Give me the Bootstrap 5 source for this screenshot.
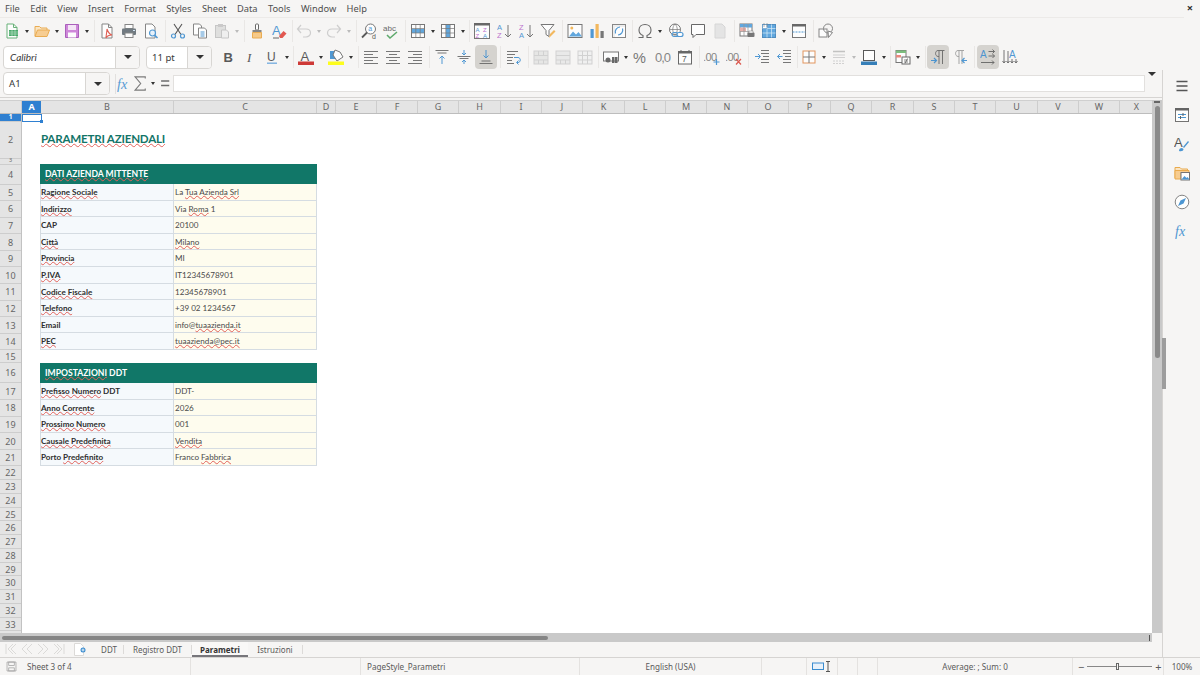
<!DOCTYPE html>
<html lang="it">
<head>
<meta charset="utf-8">
<title>Parametri - Calc</title>
<link href="https://cdn.jsdelivr.net/npm/bootstrap@5.3.0/dist/css/bootstrap.min.css" rel="stylesheet">
<style>
html, body { height: 100%; margin: 0; overflow: hidden; }
body { background: #f6f5f4; font-family: "Noto Sans", sans-serif; font-size: 9.5px; color: #3d3d3d; }
.app { width: 1200px; height: 675px; }

/* menu + toolbars */
.menu-bar { height: 17px; padding-left: 5px; gap: 10.4px; align-items: center; position: relative; }
.menu-bar a { color: #4f4f4f; text-decoration: none; font-size: 9.3px; line-height: 16px; }
.close-x { position: absolute; right: 7px; top: 1px; font-size: 11px; line-height: 14px; color: #333; font-weight: 700; }
.tool-row { align-items: center; padding-left: 1px; }
.tool-row1 { height: 27px; margin-right: 16px; border-top: 1px solid #eceae8; }
.tool-row2 { height: 26px; padding-left: 3px; }
button.tool { width: 22px; height: 24px; padding: 0; border: 0; border-radius: 4px; display: flex; align-items: center; justify-content: center; flex: none; }
button.tool.on { background: #d5d3cf; }
.tool svg { width: 16px; height: 16px; display: block; opacity: .88; }
.fx-tools svg { width: 17px; height: 17px; display: block; opacity: .85; }
.dd { width: 8px; flex: none; display: flex; justify-content: center; }
.dd::before { content: ""; border: 2.5px solid transparent; border-top: 3px solid #333; border-bottom: 0; }
.dd.off::before { border-top-color: #bbb; }
.sp { flex: none; align-self: center; height: 22px; position: relative; }
.sp::before { content: ""; position: absolute; left: 50%; top: 0; bottom: 0; border-left: 1px solid #e9e7e5; }
.s3 { width: 3px; } .s4 { width: 4px; } .s5 { width: 5px; } .s6 { width: 6px; } .s1 { width: 1px; }
.s1::before { display: none; }

.combo { height: 23px; flex: none; border: 1px solid #d8d6d3; border-radius: 4px; background: #fff; display: flex; overflow: hidden; }
.combo .txt { flex: 1; padding-left: 6px; line-height: 21px; font-size: 9.6px; color: #3a3a3a; }
.combo .arr { width: 24px; background: #f6f5f4; border-left: 1px solid #d8d6d3; display: flex; align-items: center; justify-content: center; }
.arr::before { content: ""; border: 4px solid transparent; border-top: 4px solid #333; border-bottom: 0; }
.font-box { width: 137px; margin-right: 6px; font-style: italic; }
.font-box .txt { font-family: Lato, sans-serif; font-size: 10px; }
.size-box { width: 66px; margin-right: 5px; }
.size-box .txt { padding-left: 5px; }

/* formula */
.fx-bar { height: 28px; padding-left: 3px; border-bottom: 1px solid #d6d4d2; margin-bottom: 2px; }
.name-box { width: 107px; margin-right: 5px; }
.name-box .txt { padding-left: 5px; }
.fx-tools { width: 58px; flex: none; border-left: 1px solid #e2e0de; height: 20px; }
.fx-input { width: 972px; height: 17px; background: #fff; border: 1px solid #e2e0de; flex: none; }
.fx-end { width: 14px; display: flex; justify-content: center; }

/* sheet */
.col-heads { height: 14px; background: #e4e4e4; border-top: 1px solid #cfcfcf; border-bottom: 1px solid #bdbdbd; }
.ch { flex: none; text-align: center; line-height: 12px; font-size: 9px; color: #666; border-right: 1px solid #cdcdcd; }
.ch.sel { background: #2f80d1; color: #fff; font-weight: 700; border-right: 0; }
.ch-0 { width: 22px; }
.row-heads { width: 22px; flex: none; background: #e4e4e4; border-right: 1px solid #c2c2c2; }
.rh { text-align: center; color: #666; font-size: 9px; border-bottom: 1px solid #cdcdcd; display: flex; align-items: center; justify-content: center; line-height: 1; }
.rh.sel { background: #2f80d1; color: #fff; font-weight: 700; }
.h1r { height: 7.5px; font-size: 6.5px; } .h2r { height: 37px; } .h3r { height: 6px; font-size: 5.5px; } .h4r { height: 20px; }
.h5r { height: 16.6px; } .h6r { height: 13px; } .h7r { height: 13.75px; }
.canvas { background: #fff; position: relative; overflow: hidden; font-family: Lato, sans-serif; }
.cell-cursor { position: absolute; left: 0; top: 0; width: 19.5px; height: 7.5px; border: 1px solid #2f80d1; }
.cell-cursor::after { content: ""; position: absolute; right: -2px; bottom: -2px; width: 3px; height: 3px; background: #2f80d1; }
.block { margin-left: 18px; width: 277px; }
.gap-a { height: 7.5px; }
.title-row { height: 37px; margin-left: 19px; color: #137568; font-size: 11.6px; font-weight: 700; letter-spacing: -.22px; line-height: 33px; }
.gap-b { height: 5.5px; }
.gap-c { height: 13px; }
.band { height: 20px; background: #117768; color: #fff; font-weight: 700; font-size: 8.6px; line-height: 20px; padding-left: 5px; }
.data-row { height: 16.6px; line-height: 17px; font-size: 8.1px; color: #4a4a4a; }
.lbl { width: 134px; background: #f5f9fc; font-weight: 700; color: #2e2e2e; border-bottom: 1px solid #d5dce2; border-right: 1px solid #d5dce2; border-left: 1px solid #d5dce2; }
.val { width: 143px; padding-left: 1px; background: #fefcee; border-bottom: 1px solid #d5dce2; border-right: 1px solid #d5dce2; }
.sp-err { text-decoration: underline wavy #e2625b; text-decoration-thickness: 1px; text-underline-offset: 0; text-decoration-skip-ink: none; }

.vscroll { width: 10px; flex: none; background: #c9c9c9; position: relative; }
.vscroll-mark { height: 2px; margin: 1px 2px 0; background: #666; }
.vscroll-thumb { width: 5px; height: 252px; margin: 3px 0 0 2.5px; background: #8a8a8a; border-radius: 3px; }
.grip { position: absolute; left: 10px; top: 238px; width: 4px; height: 51px; background: #9d9d9d; z-index: 2; }
.hscroll { height: 9px; margin-right: 10px; background: #c9c9c9; padding: 3px 2px; position: relative; }
.hscroll-thumb { width: 546px; height: 4px; background: #858585; border-radius: 2px; }
.hscroll-end { position: absolute; right: 2px; top: 2px; width: 1px; height: 6px; background: #555; }

.tab-bar { height: 15px; color: #5a5a5a; font-size: 8px; align-items: center; }
.nav-arrows { width: 70px; padding-left: 5px; flex: none; height: 13px; }
.nav-arrows svg { width: 60px; height: 12px; display: block; }
.add-tab { width: 25px; flex: none; display: flex; padding-left: 4px; }
.sheet-tab { text-align: center; height: 15px; line-height: 15px; flex: none; }
.tab-sep { flex: none; width: 1px; height: 9px; background: #dcdad8; }
.sheet-tab.cur { font-weight: 700; color: #333; box-shadow: inset 0 -2px 0 #77767b; background: #f9f8f7; }

.side-col { width: 38px; flex: none; border-left: 1px solid #d6d4d2; }
.side-ic { height: 29px; display: flex; align-items: center; justify-content: center; }
.side-ic svg { width: 16px; height: 16px; display: block; opacity: .9; }
.side-top { margin-top: 1px; }

.status-bar { height: 18px; border-top: 1px solid #d6d4d2; font-size: 8.1px; color: #5a5a5a; line-height: 17px; }
.st-cell { flex: none; height: 17px; border-left: 1px solid #e4e2e0; display: flex; align-items: center; }
.st-first { border-left: 0; }
.st-disk { width: 11px; height: 11px; margin: 0 10px 0 6px; }
.st-page { width: 219px; padding-left: 6px; }
.st-zoom { width: 91px; padding-left: 5px; font-size: 11px; }
.zoom-track { width: 65px; height: 1px; background: #888; position: relative; margin: 0 3px; }
.zoom-thumb { position: absolute; left: 29px; top: -3px; width: 3px; height: 7px; border: 1px solid #666; background: #f6f5f4; }
.st-pct { width: 37px; }
</style>
</head>
<body>
<svg width="0" height="0" class="position-absolute">
  <defs>
    <symbol id="new" viewBox="0 0 16 16"><path d="M3 1h6.500L13 4.500V15H3z" fill="#fff" stroke="#55a868"/><path d="M9.500 1v3.500H13" fill="none" stroke="#55a868"/><rect x="5" y="7" width="9" height="6" fill="#2f9e58"/><path d="M5 9h9M5 11h9M8 7v6M11 7v6" stroke="#bfe5cb" stroke-width=".6"/></symbol>
    <symbol id="open" viewBox="0 0 16 16"><path d="M1 13V3.500h4.500l1.500 1.500h6V7" fill="#fbe3bd" stroke="#e8a23c"/><path d="M3.500 7H15.500L13 13.500H1z" fill="#f8c885" stroke="#e8a23c"/></symbol>
    <symbol id="save" viewBox="0 0 16 16"><path d="M1.500 1.500h13v13h-13z" fill="#c978d6" stroke="#a04bb4"/><rect x="4" y="2" width="8" height="5" fill="#f4e3f7"/><rect x="4" y="9.500" width="8" height="5" fill="#fff"/></symbol>
    <symbol id="pdf" viewBox="0 0 16 16"><path d="M3 1h6.500L13 4.500V15H3z" fill="#fff" stroke="#777"/><path d="M9.500 1v3.500H13" fill="none" stroke="#777"/><path d="M8 6c1 3 2 5 5 6-3 0-5 1-6 3 0-3 1-6 1-9z" fill="none" stroke="#dc4b3e" stroke-width="1.100"/></symbol>
    <symbol id="print" viewBox="0 0 16 16"><rect x="4" y="1.500" width="8" height="4" fill="#fff" stroke="#777"/><rect x="1" y="5.500" width="14" height="6.500" rx="1" fill="#5f6a72"/><rect x="4" y="10" width="8" height="4.500" fill="#fff" stroke="#777"/><rect x="12" y="7" width="2" height="1" fill="#cfe3f5"/></symbol>
    <symbol id="preview" viewBox="0 0 16 16"><path d="M2.500 1h6.500L12 4V15H2.500z" fill="#fff" stroke="#777"/><circle cx="9.500" cy="10" r="3" fill="#e6f1fb" stroke="#3a8ccf" stroke-width="1.200"/><path d="M11.500 12.200l3 2.800" stroke="#3a8ccf" stroke-width="1.600"/></symbol>
    <symbol id="cut" viewBox="0 0 16 16"><path d="M4 1l7 10.500M12 1L5 11.500" stroke="#3f3f3f" stroke-width="1.100" fill="none"/><circle cx="3.500" cy="13" r="2" fill="none" stroke="#3a8ccf" stroke-width="1.200"/><circle cx="12.500" cy="13" r="2" fill="none" stroke="#3a8ccf" stroke-width="1.200"/></symbol>
    <symbol id="copy" viewBox="0 0 16 16"><path d="M1.500 1h6l2 2v9h-8z" fill="#fff" stroke="#777"/><path d="M6.500 5h6l2 2v8h-8z" fill="#fff" stroke="#777"/><path d="M8.500 9h4M8.500 11h4M8.500 13h4" stroke="#3a8ccf"/></symbol>
    <symbol id="paste" viewBox="0 0 16 16"><rect x="1.500" y="2.500" width="10" height="12" fill="#dcdcdc" stroke="#c0c0c0"/><rect x="4" y="1" width="5" height="3" fill="#c4c4c4"/><path d="M7.500 7h5l2 2v6h-7z" fill="#efefef" stroke="#c0c0c0"/></symbol>
    <symbol id="clone" viewBox="0 0 16 16"><rect x="6.500" y="1" width="3" height="6" rx="1" fill="#fff" stroke="#555"/><rect x="3.500" y="7" width="9" height="2.500" fill="#777"/><path d="M3.500 9.500h9V15h-9z" fill="#f6c37a" stroke="#e8a23c"/></symbol>
    <symbol id="clear" viewBox="0 0 16 16"><text x="1" y="12" font-family="Liberation Sans, sans-serif" font-size="13" fill="#3a8ccf">A</text><path d="M8 13l4.500-5 3 2.500-4 4.500H9z" fill="#e0433a"/><path d="M2 15h6" stroke="#555"/></symbol>
    <symbol id="undo" viewBox="0 0 16 16"><path d="M5 2L1.500 6 5 10M1.500 6H10c3 0 4.500 2 4.500 4s-2 4-4.500 4H7" fill="none" stroke="#c9c9c9" stroke-width="1.200"/></symbol>
    <symbol id="redo" viewBox="0 0 16 16"><path d="M11 2l3.500 4L11 10M14.500 6H6C3 6 1.500 8 1.500 10s2 4 4.500 4h3" fill="none" stroke="#c9c9c9" stroke-width="1.200"/></symbol>
    <symbol id="find" viewBox="0 0 16 16"><circle cx="9.500" cy="6" r="5" fill="#fff" stroke="#666"/><path d="M6 9.500L1 14.500" stroke="#444" stroke-width="1.800"/><text x="7.200" y="8.300" font-family="Liberation Sans, sans-serif" font-size="7" fill="#3a8ccf">a</text><text x="11" y="15.500" font-family="Liberation Sans, sans-serif" font-size="7" fill="#444">d</text></symbol>
    <symbol id="spell" viewBox="0 0 16 16"><text x="0" y="8" font-family="Liberation Sans, sans-serif" font-size="8" fill="#555">abc</text><path d="M4 12l3 3 7-6" fill="none" stroke="#4aa05a" stroke-width="1.500"/></symbol>
    <symbol id="rows" viewBox="0 0 16 16"><rect x="1.500" y="1.500" width="13" height="13" fill="#fff" stroke="#666"/><rect x="2" y="6" width="12" height="4" fill="#4d9ddb"/><path d="M1.500 5.500h13M1.500 10h13M5.800 1.500v13M10.200 1.500v13" stroke="#666" stroke-width=".7"/></symbol>
    <symbol id="cols" viewBox="0 0 16 16"><rect x="1.500" y="1.500" width="13" height="13" fill="#fff" stroke="#666"/><rect x="6" y="2" width="4" height="12" fill="#4d9ddb"/><path d="M1.500 5.500h13M1.500 10h13M5.800 1.500v13M10.200 1.500v13" stroke="#666" stroke-width=".7"/></symbol>
    <symbol id="sortaz" viewBox="0 0 16 16"><rect x=".5" y=".5" width="15" height="15" fill="#fff" stroke="#666"/><rect x="0" y="0" width="16" height="2.500" fill="#555"/><text x="1.500" y="8.500" font-family="Liberation Sans, sans-serif" font-size="6" fill="#3a8ccf">A</text><text x="9" y="8.500" font-family="Liberation Sans, sans-serif" font-size="6" fill="#b560c8">Z</text><text x="1.500" y="14.500" font-family="Liberation Sans, sans-serif" font-size="6" fill="#b560c8">Z</text><text x="9" y="14.500" font-family="Liberation Sans, sans-serif" font-size="6" fill="#3a8ccf">A</text></symbol>
    <symbol id="asc" viewBox="0 0 16 16"><text x="1" y="7" font-family="Liberation Sans, sans-serif" font-size="7.500" fill="#3a8ccf">A</text><text x="1" y="15" font-family="Liberation Sans, sans-serif" font-size="7.500" fill="#b560c8">Z</text><path d="M12 2v12M9 11l3 3 3-3" fill="none" stroke="#666"/></symbol>
    <symbol id="desc" viewBox="0 0 16 16"><text x="1" y="7" font-family="Liberation Sans, sans-serif" font-size="7.500" fill="#b560c8">Z</text><text x="1" y="15" font-family="Liberation Sans, sans-serif" font-size="7.500" fill="#3a8ccf">A</text><path d="M12 2v12M9 11l3 3 3-3" fill="none" stroke="#666"/></symbol>
    <symbol id="filter" viewBox="0 0 16 16"><path d="M1 1.500h13l-5 6v6l-3-2v-4z" fill="#fff" stroke="#666"/><path d="M9 15l1-4 4-4 1.500 1.500-4 4z" fill="#f2b04a"/></symbol>
    <symbol id="image" viewBox="0 0 16 16"><rect x="1" y="1.500" width="14" height="13" fill="#fff" stroke="#666"/><circle cx="4.800" cy="5" r="1.500" fill="#f2b04a"/><path d="M2 13.500l4-5 3 3 2.500-2.500 3.500 4.500z" fill="#4d9ddb"/></symbol>
    <symbol id="chart" viewBox="0 0 16 16"><rect x="1.500" y="6" width="3.200" height="9" fill="#3a8ccf"/><rect x="6.500" y="1" width="3.200" height="14" fill="#f2b04a"/><rect x="11.500" y="8" width="3.200" height="7" fill="#666"/></symbol>
    <symbol id="pivot" viewBox="0 0 16 16"><rect x="1.500" y="1.500" width="13" height="13" fill="#eee" stroke="#777"/><rect x="4" y="4" width="10" height="10" fill="#fff"/><path d="M11.500 5.500A5 5 0 0 1 7 12" fill="none" stroke="#3a8ccf" stroke-width="1.200"/><path d="M4.500 10.500A5 5 0 0 1 9 4" fill="none" stroke="#3a8ccf" stroke-width="1.200"/></symbol>
    <symbol id="omega" viewBox="0 0 16 16"><path d="M1.500 14.500h4.500v-2C3.500 11.500 2 9.500 2 7c0-3.500 2.700-5.500 6-5.500S14 3.500 14 7c0 2.500-1.500 4.500-4 5.500v2h4.500" fill="none" stroke="#555" stroke-width="1.100"/></symbol>
    <symbol id="link" viewBox="0 0 16 16"><circle cx="7" cy="6.500" r="5.500" fill="#fff" stroke="#666"/><path d="M1.500 6.500h11M7 1c-3 3-3 8 0 11M7 1c3 3 3 8 0 11" fill="none" stroke="#666" stroke-width=".7"/><rect x="4" y="9.500" width="6" height="4" rx="2" fill="none" stroke="#3a8ccf" stroke-width="1.200"/><rect x="9" y="9.500" width="6" height="4" rx="2" fill="#fff" stroke="#3a8ccf" stroke-width="1.200"/></symbol>
    <symbol id="comment" viewBox="0 0 16 16"><path d="M1.500 1.500h13v10H6l-3 3v-3H1.500z" fill="#fff" stroke="#555"/></symbol>
    <symbol id="header" viewBox="0 0 16 16"><path d="M3 1h7l3 3v11H3z" fill="#e2e2e2" stroke="#d2d2d2"/></symbol>
    <symbol id="hdrgrid" viewBox="0 0 16 16"><rect x="1" y="1" width="12" height="12" fill="#fff" stroke="#666"/><rect x="1" y="1" width="12" height="3.500" fill="#4d9ddb"/><rect x="1" y="4.500" width="6" height="4" fill="#e8a79f"/><path d="M1 8.500h12M5 1v12M9 1v12" stroke="#888" stroke-width=".7"/><rect x="8.500" y="9.500" width="7" height="4.500" rx="1" fill="#666"/><rect x="10" y="8" width="4" height="2" fill="#fff" stroke="#666" stroke-width=".5"/></symbol>
    <symbol id="freeze" viewBox="0 0 16 16"><rect x="1.500" y="1.500" width="13" height="13" fill="#4d9ddb" stroke="#3a7fb8"/><path d="M1.500 5.500h13M1.500 10h13M6 1.500v13M10.500 1.500v13" stroke="#d6ebf9" stroke-width=".7"/><path d="M1.500 1.500h4.500v4H1.500z" fill="#fff" stroke="#3a7fb8" stroke-width=".6"/><path d="M3 .5v3M6 .5v3" stroke="#333" stroke-width=".8" stroke-dasharray="1 1"/></symbol>
    <symbol id="split" viewBox="0 0 16 16"><rect x="1.500" y="1.500" width="13" height="13" fill="#fff" stroke="#666"/><rect x="1" y="1" width="14" height="2.500" fill="#555"/><path d="M1.500 9h13" stroke="#3a8ccf" stroke-dasharray="2 1"/></symbol>
    <symbol id="shapes" viewBox="0 0 16 16"><rect x="1" y="6" width="8" height="8" fill="#fff" stroke="#777"/><circle cx="10" cy="5.500" r="4.500" fill="none" stroke="#777"/><path d="M10 8l4.500 1.500-4 5z" fill="#fff" stroke="#777"/></symbol>

    <symbol id="bold" viewBox="0 0 16 16"><text x="3.500" y="13" font-family="Liberation Sans, sans-serif" font-weight="700" font-size="13" fill="#444">B</text></symbol>
    <symbol id="ital" viewBox="0 0 16 16"><text x="5" y="13" font-family="Liberation Serif, serif" font-style="italic" font-size="13" fill="#444">I</text></symbol>
    <symbol id="under" viewBox="0 0 16 16"><text x="3" y="11.500" font-family="Liberation Sans, sans-serif" font-size="12" fill="#444">U</text><rect x="3" y="13.500" width="10" height="1.400" fill="#6aa7dd"/></symbol>
    <symbol id="fcolor" viewBox="0 0 16 16"><text x="2.500" y="11.500" font-family="Liberation Sans, sans-serif" font-size="13" fill="#444">A</text><rect x="0" y="12.500" width="16" height="3.500" fill="#c9211e"/></symbol>
    <symbol id="bcolor" viewBox="0 0 16 16"><path d="M2 2h6v8H2z" fill="#3a8ccf"/><path d="M7 1l5 2 3 5-6 4-4-6z" fill="#fff" stroke="#666"/><rect x="0" y="12.500" width="16" height="3.500" fill="#ffff00"/></symbol>
    <symbol id="al" viewBox="0 0 16 16"><path d="M1 2.500h14M1 5.500h9M1 8.500h14M1 11.500h9M1 14.500h14" stroke="#666"/></symbol>
    <symbol id="ac" viewBox="0 0 16 16"><path d="M1 2.500h14M4 5.500h8M1 8.500h14M4 11.500h8M1 14.500h14" stroke="#666"/></symbol>
    <symbol id="ar" viewBox="0 0 16 16"><path d="M1 2.500h14M6 5.500h9M1 8.500h14M6 11.500h9M1 14.500h14" stroke="#666"/></symbol>
    <symbol id="vt" viewBox="0 0 16 16"><path d="M1.500 1.500h13M3.500 4h9" stroke="#666"/><path d="M8 15V7M5.500 9.500L8 7l2.500 2.500" fill="none" stroke="#3a8ccf"/></symbol>
    <symbol id="vm" viewBox="0 0 16 16"><path d="M1.500 7.500h13M3.500 9.500h9" stroke="#666"/><path d="M8 1v5M6 4l2 2 2-2M8 15v-4M6 13l2-2 2 2" fill="none" stroke="#3a8ccf"/></symbol>
    <symbol id="vb" viewBox="0 0 16 16"><path d="M3.500 12h9M1.500 14.500h13" stroke="#666"/><path d="M8 1v8M5.500 6.500L8 9l2.500-2.500" fill="none" stroke="#3a8ccf"/></symbol>
    <symbol id="wrap" viewBox="0 0 16 16"><path d="M1 2.500h11M1 5.500h8M1 8.500h6M1 11.500h5M1 14.500h7" stroke="#666"/><path d="M8 8.500h4c3 0 3 5 0 5h-1M12.500 11.500l-2 2 2 2" fill="none" stroke="#3a8ccf"/></symbol>
    <symbol id="merge" viewBox="0 0 16 16"><rect x="1" y="2" width="14" height="13" fill="#e4e4e4" stroke="#cdcdcd"/><path d="M1 6.500h14M1 11h14" stroke="#cdcdcd"/><path d="M5.500 2v4.500M10.500 2v4.500M5.500 11v4M10.500 11v4" stroke="#cdcdcd"/></symbol>
    <symbol id="merge2" viewBox="0 0 16 16"><rect x="1" y="2" width="14" height="13" fill="#e8e8e8" stroke="#cdcdcd"/><path d="M1 6.500h14M1 11h14M5.500 11v4M10.500 11v4" stroke="#cdcdcd"/></symbol>
    <symbol id="merge3" viewBox="0 0 16 16"><rect x="1" y="2" width="14" height="13" fill="#f0f0f0" stroke="#cdcdcd"/><path d="M1 6.500h14M1 11h14M5.500 2v13M10.500 2v13" stroke="#cdcdcd"/></symbol>
    <symbol id="curr" viewBox="0 0 16 16"><rect x=".5" y="3" width="15" height="9" fill="#fff" stroke="#666"/><circle cx="5" cy="11" r="2.500" fill="#555"/><rect x="9" y="8" width="2.500" height="6" fill="#555"/><rect x="12" y="8" width="2.500" height="6" fill="#555"/></symbol>
    <symbol id="pct" viewBox="0 0 16 16"><text x="0" y="13.500" font-family="Liberation Sans, sans-serif" font-size="14.500" fill="#666">%</text></symbol>
    <symbol id="num" viewBox="0 0 16 16"><text x="0" y="13" font-family="Liberation Sans, sans-serif" font-size="13" letter-spacing="-1" fill="#777">0,0</text></symbol>
    <symbol id="date" viewBox="0 0 16 16"><rect x="1.500" y="2.500" width="13" height="12.500" fill="#fff" stroke="#555"/><rect x="1.500" y="2.500" width="13" height="2" fill="#555"/><path d="M4 1v2M12 1v2" stroke="#555"/><text x="5" y="13" font-family="Liberation Sans, sans-serif" font-size="8.500" fill="#444">7</text></symbol>
    <symbol id="decp" viewBox="0 0 16 16"><text x="-1" y="11.500" font-family="Liberation Sans, sans-serif" font-size="11" letter-spacing="-.6" fill="#777">.00</text><path d="M12.500 10v6M9.500 13h6" stroke="#3a8ccf" stroke-width="1.200"/></symbol>
    <symbol id="decm" viewBox="0 0 16 16"><text x="-1" y="11.500" font-family="Liberation Sans, sans-serif" font-size="11" letter-spacing="-.6" fill="#777">.00</text><path d="M10 10l5 5.500M15 10l-5 5.500" stroke="#d9453a" stroke-width="1.200"/></symbol>
    <symbol id="indp" viewBox="0 0 16 16"><path d="M7 1.500h8M7 4.500h8M9 7.500h6M7 10.500h8M7 13.500h8" stroke="#666"/><path d="M1 7.500h5M4 5l2.500 2.500L4 10" fill="none" stroke="#3a8ccf"/></symbol>
    <symbol id="indm" viewBox="0 0 16 16"><path d="M7 1.500h8M7 4.500h8M9 7.500h6M7 10.500h8M7 13.500h8" stroke="#666"/><path d="M6.500 7.500h-5M4 5L1.500 7.500 4 10" fill="none" stroke="#3a8ccf"/></symbol>
    <symbol id="bord" viewBox="0 0 16 16"><rect x="2" y="2" width="12" height="12" fill="#fff" stroke="#e08a4a"/><path d="M8 2v12M2 8h12" stroke="#666"/></symbol>
    <symbol id="lines" viewBox="0 0 16 16"><path d="M2 2.500h12" stroke="#bbb" stroke-width="1.500"/><path d="M2 6h12M2 8.500h12" stroke="#ccc"/><path d="M2 12h12M2 14.500h12" stroke="#ccc" stroke-dasharray="2 1"/></symbol>
    <symbol id="bcol" viewBox="0 0 16 16"><rect x="2.500" y="1.500" width="11" height="10" fill="#fff" stroke="#444"/><rect x="0" y="12.500" width="16" height="3.500" fill="#1c6fb0"/></symbol>
    <symbol id="cond" viewBox="0 0 16 16"><rect x="1" y="1.500" width="10" height="12" fill="#fff" stroke="#666"/><rect x="1" y="1.500" width="10" height="2.500" fill="#6db76f"/><rect x="1" y="6" width="5" height="2.500" fill="#e8796e"/><rect x="7" y="8" width="8" height="7" fill="#fff" stroke="#555"/><path d="M9 11h4M9 13h4M12.500 9.500l-2.500 5" stroke="#555" stroke-width=".8"/></symbol>
    <symbol id="ltr" viewBox="0 0 16 16"><path d="M9 15V1.500M12.500 15V1.500M14.500 1.500H8C5 1.500 4.500 7 8 7.500h1" fill="none" stroke="#666"/><path d="M1 11.500h5.500M4 9l2.500 2.500L4 14" fill="none" stroke="#3a8ccf" stroke-width="1.200"/></symbol>
    <symbol id="rtl" viewBox="0 0 16 16"><path d="M7 15V1.500M10 15V1.500M12 1.500H6C3 1.500 2.500 7 6 7.500h1" fill="none" stroke="#999"/><path d="M15 11.500H10M12.500 9L10 11.500 12.500 14" fill="none" stroke="#3a8ccf" stroke-width="1.200"/></symbol>
    <symbol id="txh" viewBox="0 0 16 16"><text x="0" y="8.500" font-family="Liberation Sans, sans-serif" font-size="10" fill="#3a8ccf">A</text><path d="M8.500 2.500h6M12.500 .5l2 2-2 2M8.500 7h6M12.500 5l2 2-2 2M1 13.500h13M12 11.500l2 2-2 2" fill="none" stroke="#555" stroke-width=".9"/></symbol>
    <symbol id="txv" viewBox="0 0 16 16"><text x="7" y="9" font-family="Liberation Sans, sans-serif" font-size="10" fill="#3a8ccf">A</text><path d="M2 1v13M.5 12l1.500 2 1.500-2M6 2v12M4.500 12L6 14l1.500-2M10 10v4M8.500 12l1.500 2 1.500-2M14 10v4M12.500 12l1.500 2 1.500-2" fill="none" stroke="#555" stroke-width=".9"/></symbol>

    <symbol id="fxi" viewBox="0 0 16 16"><text x="1" y="13" font-family="Liberation Serif, serif" font-style="italic" font-size="14" fill="#3a8ccf">fx</text></symbol>
    <symbol id="sum" viewBox="0 0 16 16"><path d="M13 3V1.500H3L8.500 8 3 14.500h10V13" fill="none" stroke="#666" stroke-width="1.100"/></symbol>
    <symbol id="eq" viewBox="0 0 16 16"><path d="M4 5.500h8M4 10h8" stroke="#555" stroke-width="1.500"/></symbol>
    <symbol id="burger" viewBox="0 0 16 16"><path d="M2.500 3.500h11M2.500 8h11M2.500 12.500h11" stroke="#444" stroke-width="1.300"/></symbol>
    <symbol id="props" viewBox="0 0 16 16"><rect x="1.500" y="1.500" width="13" height="13" fill="#fff" stroke="#666"/><rect x="1" y="1" width="14" height="2.500" fill="#555"/><path d="M4 7.500h8M4 10.500h8" stroke="#3a8ccf"/><path d="M9 6v3M6.500 9v3" stroke="#555"/></symbol>
    <symbol id="styl" viewBox="0 0 16 16"><text x="0" y="11" font-family="Liberation Sans, sans-serif" font-size="13" fill="#444">A</text><path d="M5 15c0-2 1-3 3-3l1.500 1c0 2-2 2.500-4.500 2zM9 11l5-6 1 1-5 6z" fill="#3a8ccf"/></symbol>
    <symbol id="galy" viewBox="0 0 16 16"><path d="M1 13V2.500h5l1.500 1.500h6v2" fill="#fbe3bd" stroke="#e8a23c"/><path d="M1 5.500h14V8H7v6H1z" fill="#f8c885" stroke="#e8a23c"/><rect x="7" y="7.500" width="8.500" height="7.500" fill="#fff" stroke="#666"/><path d="M7.500 14.500l3-3.500 2 2 1-1 2 2.500z" fill="#3a8ccf"/></symbol>
    <symbol id="navi" viewBox="0 0 16 16"><circle cx="8" cy="8" r="6.800" fill="#fff" stroke="#777"/><path d="M12 4L9.500 9.500 4 12l2.500-5.500z" fill="#3a8ccf"/></symbol>
    <symbol id="disk" viewBox="0 0 16 16"><path d="M1.500 1.500h13v13h-13z" fill="none" stroke="#999"/><rect x="4" y="1.500" width="8" height="5" fill="none" stroke="#999"/><rect x="4" y="10" width="8" height="4.500" fill="none" stroke="#999"/></symbol>
  </defs>
</svg>

<div class="app d-flex flex-column">
  <nav class="menu-bar d-flex">
    <a href="#">File</a><a href="#">Edit</a><a href="#">View</a><a href="#">Insert</a><a href="#">Format</a><a href="#">Styles</a><a href="#">Sheet</a><a href="#">Data</a><a href="#">Tools</a><a href="#">Window</a><a href="#">Help</a>
    <span class="close-x">×</span>
  </nav>

  <!-- standard toolbar -->
  <div class="tool-row tool-row1 d-flex">
    <button class="btn tool"><svg><use href="#new"/></svg></button><span class="dd"></span>
    <button class="btn tool"><svg><use href="#open"/></svg></button><span class="dd"></span>
    <button class="btn tool"><svg><use href="#save"/></svg></button><span class="dd"></span>
    <span class="sp s5"></span>
    <button class="btn tool"><svg><use href="#pdf"/></svg></button>
    <button class="btn tool"><svg><use href="#print"/></svg></button>
    <button class="btn tool"><svg><use href="#preview"/></svg></button>
    <span class="sp s5"></span>
    <button class="btn tool"><svg><use href="#cut"/></svg></button>
    <button class="btn tool"><svg><use href="#copy"/></svg></button>
    <button class="btn tool"><svg><use href="#paste"/></svg></button><span class="dd off"></span>
    <span class="sp s5"></span>
    <button class="btn tool"><svg><use href="#clone"/></svg></button>
    <button class="btn tool"><svg><use href="#clear"/></svg></button>
    <span class="sp s3"></span>
    <button class="btn tool"><svg><use href="#undo"/></svg></button><span class="dd off"></span>
    <button class="btn tool"><svg><use href="#redo"/></svg></button><span class="dd off"></span>
    <span class="sp s5"></span>
    <button class="btn tool"><svg><use href="#find"/></svg></button>
    <button class="btn tool"><svg><use href="#spell"/></svg></button>
    <span class="sp s5"></span>
    <button class="btn tool"><svg><use href="#rows"/></svg></button><span class="dd"></span>
    <button class="btn tool"><svg><use href="#cols"/></svg></button><span class="dd"></span>
    <span class="sp s4"></span>
    <button class="btn tool"><svg><use href="#sortaz"/></svg></button>
    <button class="btn tool"><svg><use href="#asc"/></svg></button>
    <button class="btn tool"><svg><use href="#desc"/></svg></button>
    <button class="btn tool"><svg><use href="#filter"/></svg></button>
    <span class="sp s5"></span>
    <button class="btn tool"><svg><use href="#image"/></svg></button>
    <button class="btn tool"><svg><use href="#chart"/></svg></button>
    <button class="btn tool"><svg><use href="#pivot"/></svg></button>
    <span class="sp s4"></span>
    <button class="btn tool"><svg><use href="#omega"/></svg></button><span class="dd"></span>
    <span class="sp s1"></span>
    <button class="btn tool"><svg><use href="#link"/></svg></button>
    <button class="btn tool"><svg><use href="#comment"/></svg></button>
    <button class="btn tool"><svg><use href="#header"/></svg></button>
    <span class="sp s5"></span>
    <button class="btn tool"><svg><use href="#hdrgrid"/></svg></button>
    <button class="btn tool"><svg><use href="#freeze"/></svg></button><span class="dd"></span>
    <button class="btn tool"><svg><use href="#split"/></svg></button>
    <span class="sp s5"></span>
    <button class="btn tool"><svg><use href="#shapes"/></svg></button>
  </div>

  <!-- formatting toolbar -->
  <div class="tool-row tool-row2 d-flex">
    <div class="combo font-box"><span class="txt">Calibri</span><span class="arr"></span></div>
    <div class="combo size-box"><span class="txt">11 pt</span><span class="arr"></span></div>
    <button class="btn tool"><svg><use href="#bold"/></svg></button>
    <button class="btn tool"><svg><use href="#ital"/></svg></button>
    <button class="btn tool"><svg><use href="#under"/></svg></button><span class="dd"></span>
    <span class="sp s4"></span>
    <button class="btn tool"><svg><use href="#fcolor"/></svg></button><span class="dd"></span>
    <button class="btn tool"><svg><use href="#bcolor"/></svg></button><span class="dd"></span>
    <span class="sp s5"></span>
    <button class="btn tool"><svg><use href="#al"/></svg></button>
    <button class="btn tool"><svg><use href="#ac"/></svg></button>
    <button class="btn tool"><svg><use href="#ar"/></svg></button>
    <span class="sp s5"></span>
    <button class="btn tool"><svg><use href="#vt"/></svg></button>
    <button class="btn tool"><svg><use href="#vm"/></svg></button>
    <button class="btn tool on"><svg><use href="#vb"/></svg></button>
    <span class="sp s6"></span>
    <button class="btn tool"><svg><use href="#wrap"/></svg></button>
    <span class="sp s5"></span>
    <button class="btn tool"><svg><use href="#merge"/></svg></button>
    <button class="btn tool"><svg><use href="#merge2"/></svg></button>
    <button class="btn tool"><svg><use href="#merge3"/></svg></button>
    <span class="sp s4"></span>
    <button class="btn tool"><svg><use href="#curr"/></svg></button><span class="dd"></span>
    <button class="btn tool"><svg><use href="#pct"/></svg></button>
    <button class="btn tool"><svg><use href="#num"/></svg></button>
    <button class="btn tool"><svg><use href="#date"/></svg></button>
    <span class="sp s5"></span>
    <button class="btn tool"><svg><use href="#decp"/></svg></button>
    <button class="btn tool"><svg><use href="#decm"/></svg></button>
    <span class="sp s6"></span>
    <button class="btn tool"><svg><use href="#indp"/></svg></button>
    <button class="btn tool"><svg><use href="#indm"/></svg></button>
    <span class="sp s3"></span>
    <button class="btn tool"><svg><use href="#bord"/></svg></button><span class="dd"></span>
    <button class="btn tool"><svg><use href="#lines"/></svg></button><span class="dd off"></span>
    <button class="btn tool"><svg><use href="#bcol"/></svg></button><span class="dd"></span>
    <span class="sp s4"></span>
    <button class="btn tool"><svg><use href="#cond"/></svg></button><span class="dd"></span>
    <span class="sp s5"></span>
    <button class="btn tool on"><svg><use href="#ltr"/></svg></button>
    <button class="btn tool"><svg><use href="#rtl"/></svg></button>
    <span class="sp s6"></span>
    <button class="btn tool on"><svg><use href="#txh"/></svg></button>
    <button class="btn tool"><svg><use href="#txv"/></svg></button>
  </div>

  <div class="d-flex flex-grow-1" style="min-height:0">
    <div class="d-flex flex-column flex-grow-1" style="min-width:0">
      <!-- formula bar -->
      <div class="fx-bar d-flex align-items-center">
        <div class="combo name-box"><span class="txt">A1</span><span class="arr"></span></div>
        <div class="fx-tools d-flex align-items-center">
          <svg><use href="#fxi"/></svg>
          <svg><use href="#sum"/></svg><span class="dd"></span>
          <svg><use href="#eq"/></svg>
        </div>
        <div class="fx-input"></div>
        <div class="fx-end"><span class="arr"></span></div>
      </div>

      <div class="d-flex flex-grow-1" style="min-height:0">
        <div class="d-flex flex-column flex-grow-1" style="min-width:0">
          <!-- column headers -->
          <div class="col-heads d-flex">
            <div class="ch ch-0"></div>
            <div class="ch sel" style="width:19px">A</div>
            <div class="ch" style="width:133px">B</div>
            <div class="ch" style="width:143px">C</div>
            <div class="ch" style="width:19px">D</div>
            <div class="ch" style="width:41px">E</div>
            <div class="ch" style="width:41px">F</div>
            <div class="ch" style="width:41px">G</div>
            <div class="ch" style="width:42px">H</div>
            <div class="ch" style="width:41px">I</div>
            <div class="ch" style="width:41px">J</div>
            <div class="ch" style="width:42px">K</div>
            <div class="ch" style="width:41px">L</div>
            <div class="ch" style="width:41px">M</div>
            <div class="ch" style="width:41px">N</div>
            <div class="ch" style="width:41px">O</div>
            <div class="ch" style="width:42px">P</div>
            <div class="ch" style="width:41px">Q</div>
            <div class="ch" style="width:42px">R</div>
            <div class="ch" style="width:41px">S</div>
            <div class="ch" style="width:41px">T</div>
            <div class="ch" style="width:42px">U</div>
            <div class="ch" style="width:41px">V</div>
            <div class="ch" style="width:41px">W</div>
            <div class="ch" style="width:33px;border-right:0">X</div>
          </div>
          <div class="d-flex flex-grow-1 overflow-hidden">
            <div class="row-heads">
              <div class="rh sel h1r">1</div><div class="rh h2r">2</div><div class="rh h3r">3</div><div class="rh h4r">4</div>
              <div class="rh h5r">5</div><div class="rh h5r">6</div><div class="rh h5r">7</div><div class="rh h5r">8</div><div class="rh h5r">9</div>
              <div class="rh h5r">10</div><div class="rh h5r">11</div><div class="rh h5r">12</div><div class="rh h5r">13</div><div class="rh h5r">14</div>
              <div class="rh h6r">15</div><div class="rh h4r">16</div>
              <div class="rh h5r">17</div><div class="rh h5r">18</div><div class="rh h5r">19</div><div class="rh h5r">20</div><div class="rh h5r">21</div>
              <div class="rh h7r">22</div><div class="rh h7r">23</div><div class="rh h7r">24</div><div class="rh h7r">25</div><div class="rh h7r">26</div><div class="rh h7r">27</div>
              <div class="rh h7r">28</div><div class="rh h7r">29</div><div class="rh h7r">30</div><div class="rh h7r">31</div><div class="rh h7r">32</div><div class="rh h7r">33</div>
            </div>
            <div class="canvas flex-grow-1">
              <div class="cell-cursor"></div>
              <div class="gap-a"></div>
              <div class="title-row"><span class="sp-err">PARAMETRI AZIENDALI</span></div>
              <div class="gap-b"></div>
              <div class="block">
                <div class="band"><span class="sp-err">DATI AZIENDA MITTENTE</span></div>
                <div class="data-row d-flex"><div class="lbl"><span class="sp-err">Ragione Sociale</span></div><div class="val">La <span class="sp-err">Tua Azienda Srl</span></div></div>
                <div class="data-row d-flex"><div class="lbl"><span class="sp-err">Indirizzo</span></div><div class="val">Via <span class="sp-err">Roma</span> 1</div></div>
                <div class="data-row d-flex"><div class="lbl">CAP</div><div class="val">20100</div></div>
                <div class="data-row d-flex"><div class="lbl"><span class="sp-err">Città</span></div><div class="val"><span class="sp-err">Milano</span></div></div>
                <div class="data-row d-flex"><div class="lbl"><span class="sp-err">Provincia</span></div><div class="val">MI</div></div>
                <div class="data-row d-flex"><div class="lbl"><span class="sp-err">P.IVA</span></div><div class="val">IT12345678901</div></div>
                <div class="data-row d-flex"><div class="lbl"><span class="sp-err">Codice Fiscale</span></div><div class="val">12345678901</div></div>
                <div class="data-row d-flex"><div class="lbl"><span class="sp-err">Telefono</span></div><div class="val">+39 02 1234567</div></div>
                <div class="data-row d-flex"><div class="lbl">Email</div><div class="val">info@<span class="sp-err">tuaazienda.it</span></div></div>
                <div class="data-row d-flex"><div class="lbl"><span class="sp-err">PEC</span></div><div class="val"><span class="sp-err">tuaazienda@pec.it</span></div></div>
              </div>
              <div class="gap-c"></div>
              <div class="block">
                <div class="band"><span class="sp-err">IMPOSTAZIONI</span> DDT</div>
                <div class="data-row d-flex"><div class="lbl"><span class="sp-err">Prefisso Numero</span> DDT</div><div class="val">DDT-</div></div>
                <div class="data-row d-flex"><div class="lbl"><span class="sp-err">Anno Corrente</span></div><div class="val">2026</div></div>
                <div class="data-row d-flex"><div class="lbl"><span class="sp-err">Prossimo Numero</span></div><div class="val">001</div></div>
                <div class="data-row d-flex"><div class="lbl"><span class="sp-err">Causale Predefinita</span></div><div class="val"><span class="sp-err">Vendita</span></div></div>
                <div class="data-row d-flex"><div class="lbl">Porto <span class="sp-err">Predefinito</span></div><div class="val">Franco <span class="sp-err">Fabbrica</span></div></div>
              </div>
            </div>
          </div>
        </div>
        <div class="vscroll">
          <div class="vscroll-mark"></div>
          <div class="vscroll-thumb"></div>
          <div class="grip"></div>
        </div>
      </div>

      <div class="hscroll"><div class="hscroll-thumb"></div><span class="hscroll-end"></span></div>

      <div class="tab-bar d-flex">
        <div class="nav-arrows">
          <svg viewBox="0 0 60 12"><g fill="none" stroke="#dbdad8"><path d="M1 1v10M8 1L3 6l5 5M11 1L6 6l5 5"/><path d="M22 1l-5 5 5 5M27 1l-5 5 5 5"/><path d="M33 1l5 5-5 5M38 1l5 5-5 5"/><path d="M49 1l5 5-5 5M52 1l5 5-5 5M59 1v10"/></g></svg>
        </div>
        <div class="add-tab">
          <svg width="12" height="14" viewBox="0 0 12 14"><path d="M.5 .5h6l3 3v9H.5z" fill="#fff" stroke="#dcdad8"/><circle cx="9" cy="7" r="2.500" fill="#3a8ccf"/><path d="M9 5.500v3M7.500 7h3" stroke="#fff" stroke-width=".8"/></svg>
        </div>
        <div class="sheet-tab" style="width:28px">DDT</div><span class="tab-sep"></span>
        <div class="sheet-tab" style="width:67px">Registro DDT</div><span class="tab-sep"></span>
        <div class="sheet-tab cur" style="width:56px">Parametri</div>
        <div class="sheet-tab" style="width:54px">Istruzioni</div><span class="tab-sep"></span>
      </div>
    </div>

    <!-- sidebar -->
    <div class="side-col">
      <div class="side-ic side-top"><svg><use href="#burger"/></svg></div>
      <div class="side-ic"><svg><use href="#props"/></svg></div>
      <div class="side-ic"><svg><use href="#styl"/></svg></div>
      <div class="side-ic"><svg><use href="#galy"/></svg></div>
      <div class="side-ic"><svg><use href="#navi"/></svg></div>
      <div class="side-ic"><svg><use href="#fxi"/></svg></div>
    </div>
  </div>

  <!-- status bar -->
  <div class="status-bar d-flex">
    <div class="st-cell st-first" style="width:190px"><svg class="st-disk"><use href="#disk"/></svg><span>Sheet 3 of 4</span></div>
    <div class="st-cell" style="width:170px"></div>
    <div class="st-cell st-page">PageStyle_Parametri</div>
    <div class="st-cell justify-content-center" style="width:182px">English (USA)</div>
    <div class="st-cell" style="width:45px"></div>
    <div class="st-cell ps-1" style="width:31px">
      <svg width="26" height="13" viewBox="0 0 26 13"><rect x="1.500" y="3" width="11" height="6.500" fill="#e8f1fa" stroke="#3a8ccf"/><path d="M15 1.500h4M15 11.500h4M17 1.500v10" fill="none" stroke="#555"/></svg>
    </div>
    <div class="st-cell" style="width:20px"></div>
    <div class="st-cell" style="width:20px"></div>
    <div class="st-cell justify-content-center" style="width:195px">Average: ; Sum: 0</div>
    <div class="st-cell st-zoom">
      <span>−</span><div class="zoom-track"><div class="zoom-thumb"></div></div><span>+</span>
    </div>
    <div class="st-cell st-pct justify-content-center">100%</div>
  </div>
</div>
</body>
</html>
